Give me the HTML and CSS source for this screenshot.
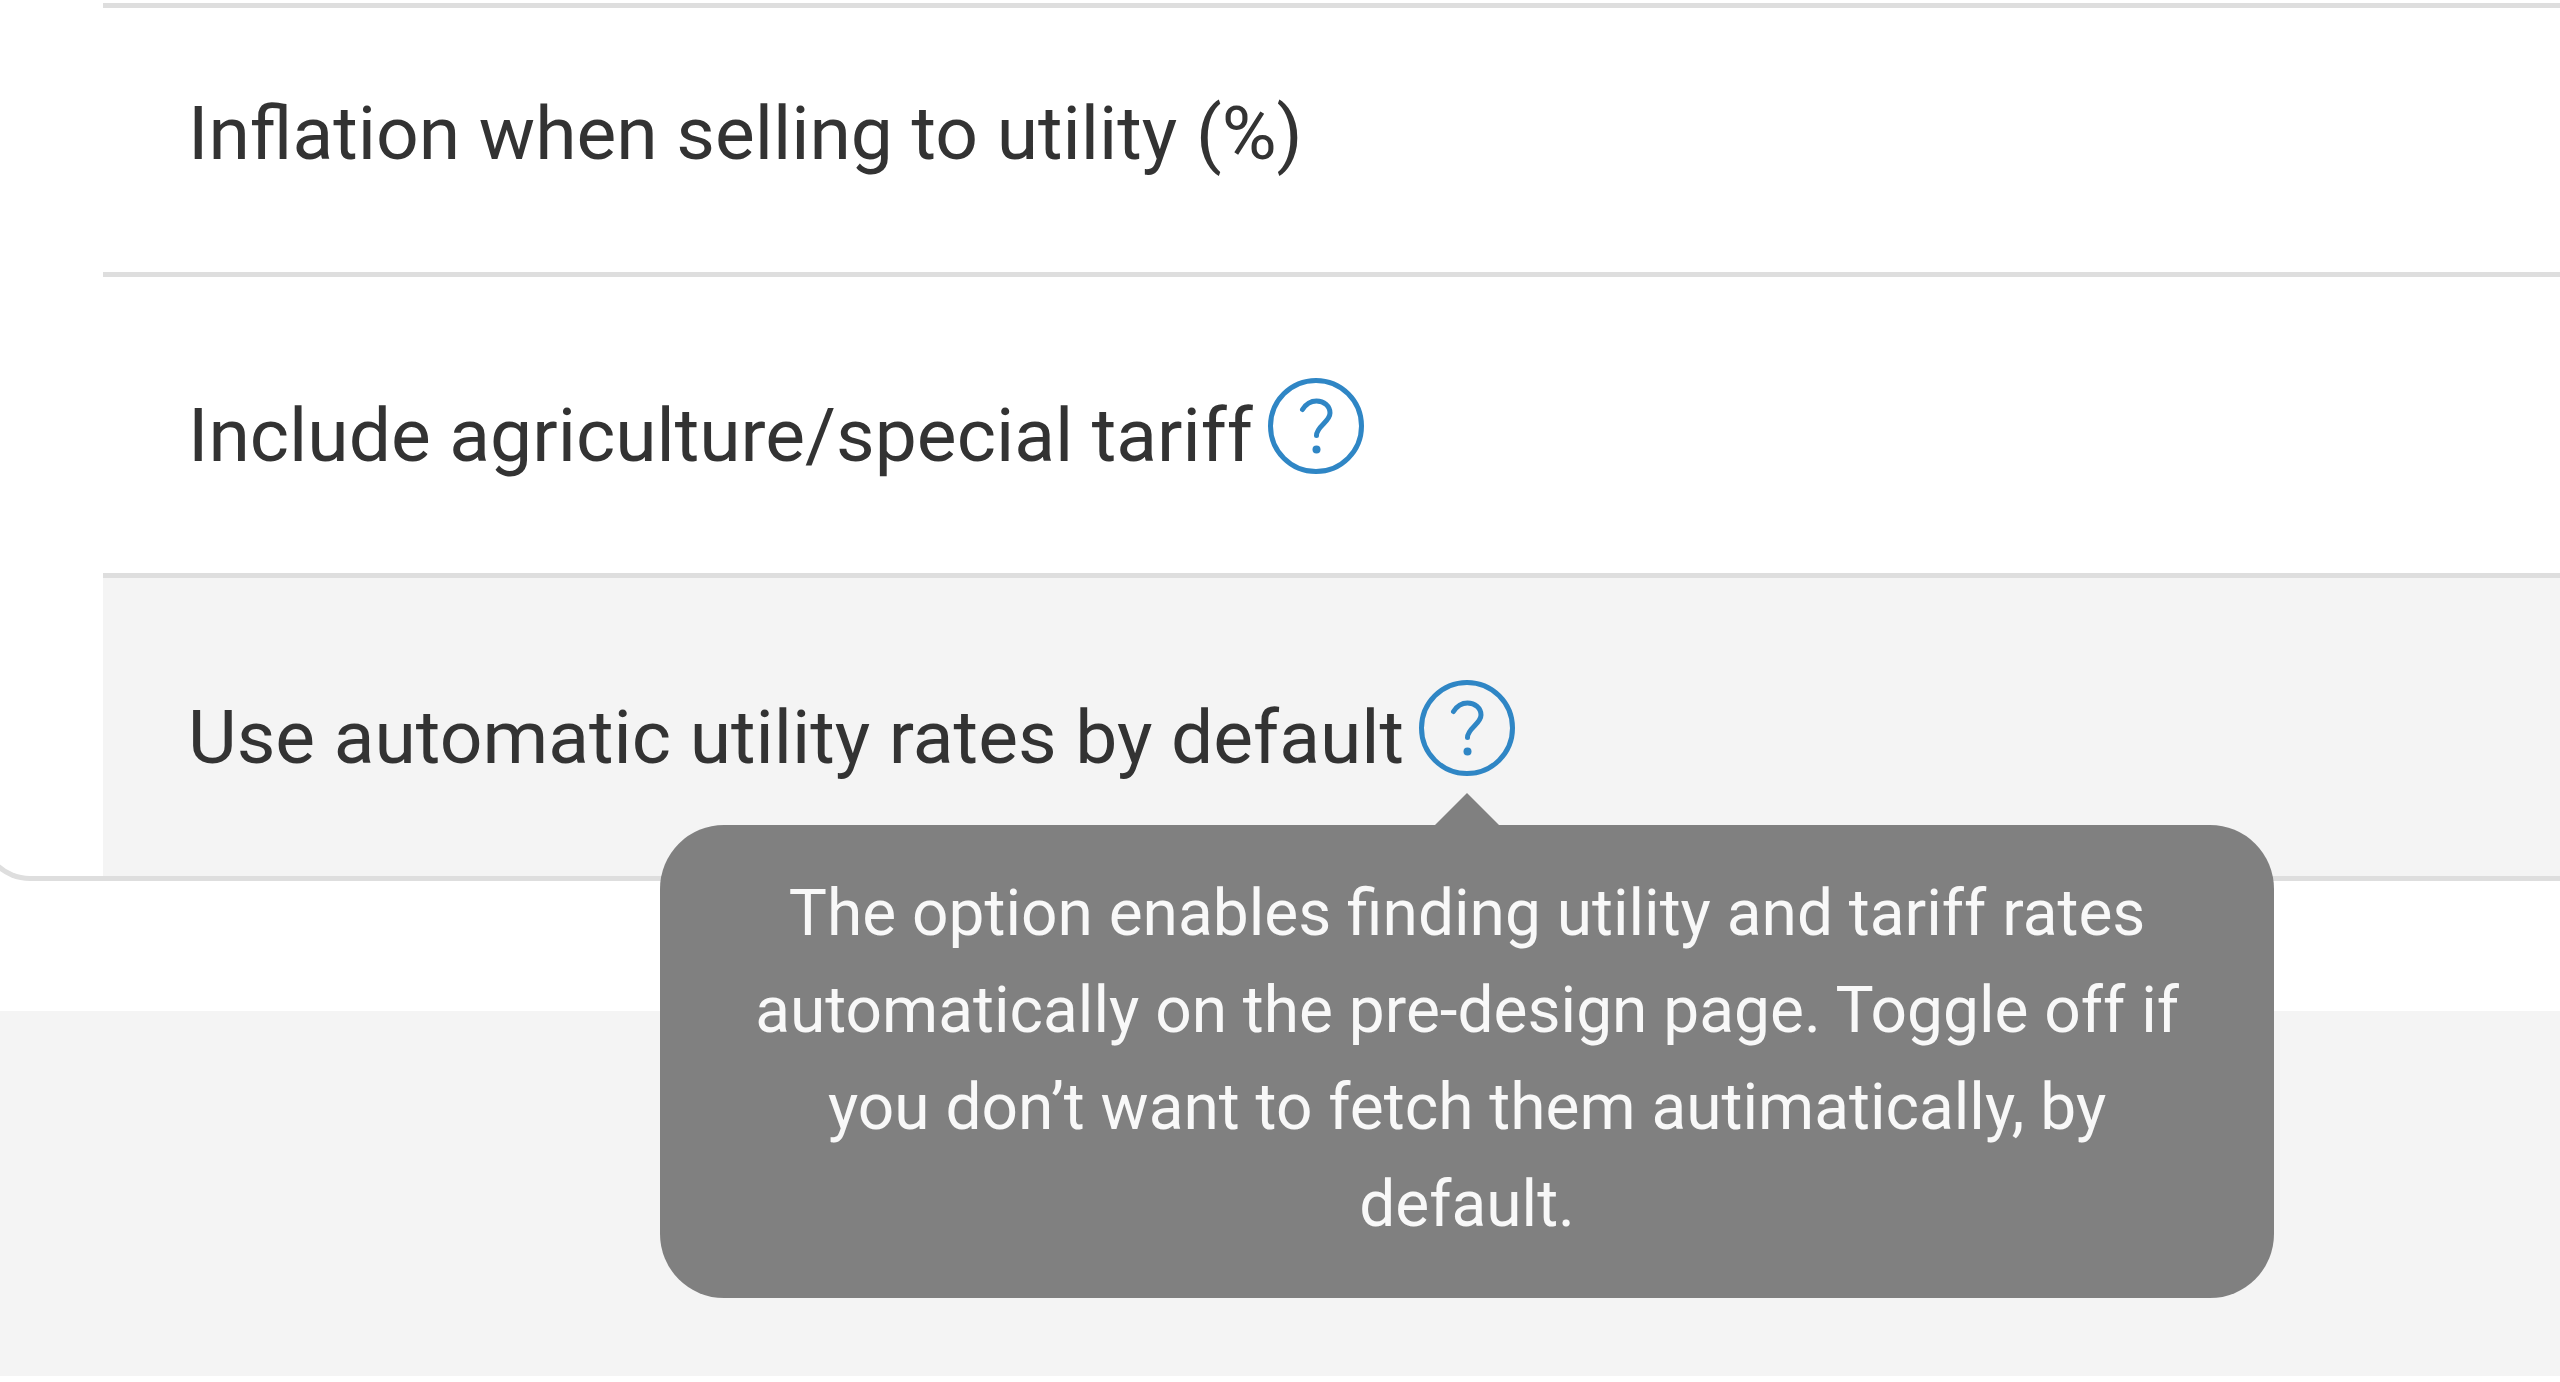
FILE: index.html
```
<!DOCTYPE html>
<html lang="en">
<head>
  <meta charset="utf-8">
  <meta name="viewport" content="width=device-width, initial-scale=1">
  <title>Utility settings</title>
  <link rel="stylesheet" href="styles.css">
</head>
<body>
  <main class="page">
    <section class="panel">
      <div class="card">
        <ul class="settings">
          <li class="setting">
            <span class="setting-label">Inflation when selling to utility (%)</span>
          </li>
          <li class="setting setting-with-help">
            <span class="setting-label">Include agriculture/special tariff</span>
            <span class="help">
              <button class="help-button" type="button" aria-label="About agriculture/special tariff">
                <svg class="help-icon" viewBox="0 0 96 96" aria-hidden="true">
                  <circle class="stroke" cx="48" cy="48" r="45.5"/>
                  <path class="stroke" d="M34.500 31.5C38 26 43 23 48.5 23C56 23 62 28 62 35C62 44 48.500 48 48.500 57.500"/>
                  <circle class="dot" cx="48.500" cy="71.500" r="4"/>
                </svg>
              </button>
            </span>
          </li>
          <li class="setting setting-with-help setting-active">
            <span class="setting-label">Use automatic utility rates by default</span>
            <span class="help">
              <button class="help-button" type="button" aria-label="About automatic utility rates" aria-describedby="rates-tip">
                <svg class="help-icon" viewBox="0 0 96 96" aria-hidden="true">
                  <circle class="stroke" cx="48" cy="48" r="45.5"/>
                  <path class="stroke" d="M34.500 31.5C38 26 43 23 48.5 23C56 23 62 28 62 35C62 44 48.500 48 48.500 57.500"/>
                  <circle class="dot" cx="48.500" cy="71.500" r="4"/>
                </svg>
              </button>
              <span class="tooltip" role="tooltip" id="rates-tip">The option enables finding utility and tariff rates automatically on the pre-design page. Toggle off if you don’t want to fetch them autimatically, by default.</span>
            </span>
          </li>
        </ul>
      </div>
    </section>
  </main>
</body>
</html>
```
FILE: styles.css
```
* {
  box-sizing: border-box;
}

body {
  display: flex;
  flex-direction: column;
  min-height: 100vh;
  margin: 0;
  padding-bottom: 6px;
  background: #fff;
  color: #333;
  font-family: Roboto, "Liberation Sans", sans-serif;
}

.page {
  flex: 1;
  overflow-x: clip;
  background: #f4f4f4;
}

.panel {
  padding: 3px 0 130px;
  background: #fff;
}

/* The card is wider than the view, so its sides run out of sight. */
.card {
  margin: 0 -60px 0 -20px;
  padding-left: 118px;
  border: 5px solid #dedede;
  border-top: 0;
  border-radius: 0 0 50px 50px;
}

.settings {
  margin: 0;
  padding: 0;
  list-style: none;
}

.setting {
  display: flex;
  align-items: center;
  gap: 15px;
  min-height: 269px;
  padding-left: 85px;
  border-top: 5px solid #dedede;
}

.setting-label {
  padding-bottom: 14px;
  font-size: 75px;
  line-height: 88px;
  white-space: nowrap;
}

.setting-with-help {
  min-height: 301px;
  padding-top: 2px;
}

.setting-with-help .setting-label {
  padding: 18px 0 0;
}

.setting-active {
  min-height: 303px;
  background: #f4f4f4;
}

.help {
  position: relative;
  display: flex;
}

.help-button {
  width: 96px;
  height: 96px;
  padding: 0;
  border: 0;
  border-radius: 50%;
  background: none;
  color: #2f86c5;
  cursor: pointer;
}

.help-icon {
  display: block;
  width: 100%;
  height: 100%;
}

.stroke {
  fill: none;
  stroke: currentColor;
  stroke-width: 5;
  stroke-linecap: round;
}

.dot {
  fill: currentColor;
}

.tooltip {
  position: absolute;
  top: calc(100% + 49px);
  left: 50%;
  width: 1614px;
  padding: 40px 64px 45px;
  border-radius: 64px;
  background: #808080;
  color: #f8f8f8;
  font-size: 64px;
  line-height: 97px;
  text-align: center;
  transform: translateX(-50%);
}

.tooltip::before {
  content: "";
  position: absolute;
  bottom: 100%;
  left: 50%;
  margin-left: -32px;
  border: 32px solid transparent;
  border-top: 0;
  border-bottom-color: #808080;
}
```
